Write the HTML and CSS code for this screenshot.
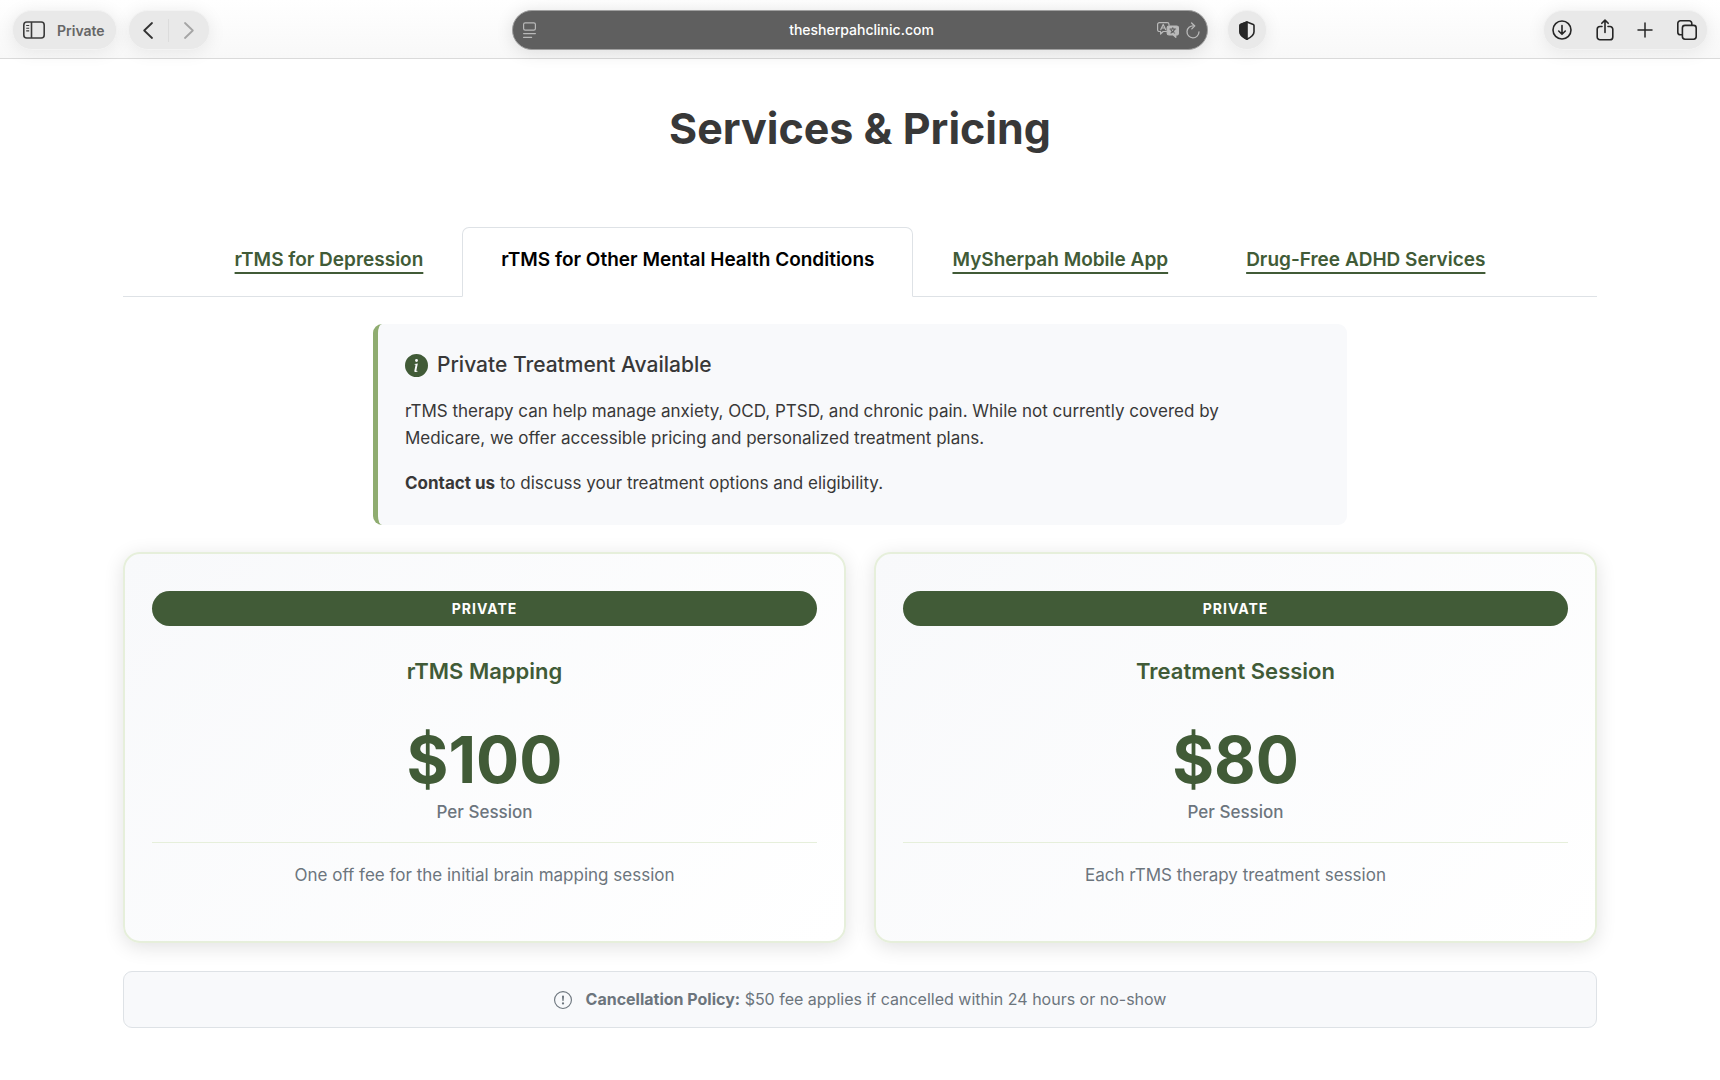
FILE: index.html
```html
<!DOCTYPE html>
<html lang="en">

<head>
    <meta charset="utf-8">
    <title>Services &amp; Pricing</title>
    <link rel="stylesheet" href="styles.css">
</head>

<body>
    <header class="toolbar">
        <div class="toolbar-left">
            <button class="pill private" type="button">
                <svg width="22" height="18" viewBox="0 0 22 18" fill="none" stroke="#3c3c3c" stroke-width="1.6">
                    <rect x="0.8" y="1" width="20.4" height="16" rx="3" />
                    <path d="M8.5 1v16" />
                    <path d="M3.2 4.5h3M3.2 7.2h3M3.2 9.9h3" stroke-width="1.1" />
                </svg>
                Private
            </button>
            <div class="pill history">
                <button type="button" aria-label="Back">
                    <svg width="10" height="17" viewBox="0 0 10 17" fill="none" stroke="#333" stroke-width="1.8" stroke-linecap="round" stroke-linejoin="round"><path d="M9 1L1.2 8.5 9 16" /></svg>
                </button>
                <span class="separator"></span>
                <button type="button" aria-label="Forward">
                    <svg width="10" height="17" viewBox="0 0 10 17" fill="none" stroke="#a5a5a5" stroke-width="1.8" stroke-linecap="round" stroke-linejoin="round"><path d="M1 1l7.8 7.5L1 16" /></svg>
                </button>
            </div>
        </div>

        <div class="address">
            <button class="address-side" type="button" aria-label="Page menu">
                <svg width="13" height="17" viewBox="0 0 13 17" fill="none" stroke="#b9b9b9" stroke-width="1.2" stroke-linecap="round">
                    <rect x="0.6" y="0.8" width="11.8" height="7.4" rx="1.6" />
                    <path d="M0.6 11.6h11.8M0.6 15.4h8" />
                </svg>
            </button>
            <input type="text" value="thesherpahclinic.com" aria-label="Address">
            <div class="address-side end">
                <button type="button" aria-label="Translate">
                    <svg width="22" height="16" viewBox="0 0 22 16" fill="none" stroke="#b9b9b9" stroke-width="1.2" stroke-linecap="round" stroke-linejoin="round">
                        <path d="M9.5 9.5H6.2L3.6 12V9.5H2.4A1.8 1.8 0 0 1 .6 7.7V2.4A1.8 1.8 0 0 1 2.4.6h7.8A1.8 1.8 0 0 1 12 2.4v.8" />
                        <path d="M3.8 7.6l2.4-5.2 2.4 5.2M4.6 6h3.2" />
                        <path d="M12 4h7.6A1.8 1.8 0 0 1 21.4 5.8v5.4a1.8 1.8 0 0 1-1.8 1.8h-.8v2.4L16.3 13H12a1.8 1.8 0 0 1-1.8-1.8V5.8A1.8 1.8 0 0 1 12 4z" fill="#b9b9b9" />
                        <path d="M13 7h5.6M15.8 5.8V7M14 11c2-.8 3.2-2.2 3.6-4M14 8c.6 1.4 2 2.6 3.6 3" stroke="#5f5f5f" />
                    </svg>
                </button>
                <button type="button" aria-label="Reload">
                    <svg width="14" height="17" viewBox="0 0 14 17" fill="none" stroke="#b9b9b9" stroke-width="1.3" stroke-linecap="round" stroke-linejoin="round">
                        <path d="M7.5 3.8A6 6 0 1 0 13 9.8" />
                        <path d="M5.6 1l3.2 2.9-3 3" />
                    </svg>
                </button>
            </div>
        </div>

        <div class="toolbar-right">
            <button class="pill shield" type="button" aria-label="Privacy report">
                <svg width="16" height="19" viewBox="0 0 16 19" fill="none" stroke="#262626" stroke-width="1.6" stroke-linejoin="round">
                    <path d="M8 1l6.3 2.4q.7.3.7 1.1v6.3c0 3.6-3.3 5.7-7 7.4-3.7-1.7-7-3.8-7-7.4V4.500q0-.8.7-1.1z" />
                    <path d="M8 1v17.2c-3.7-1.7-7-3.8-7-7.4V4.500q0-.8.7-1.1z" fill="#262626" />
                </svg>
            </button>
            <div class="pill actions">
                <button type="button" aria-label="Downloads">
                    <svg width="20" height="20" viewBox="0 0 20 20" fill="none" stroke="#262626" stroke-width="1.6" stroke-linecap="round" stroke-linejoin="round">
                        <circle cx="10" cy="10" r="9" />
                        <path d="M10 5.5V14M6.7 11l3.3 3.3 3.3-3.3" />
                    </svg>
                </button>
                <button type="button" aria-label="Share">
                    <svg width="18" height="22" viewBox="0 0 18 22" fill="none" stroke="#262626" stroke-width="1.6" stroke-linecap="round" stroke-linejoin="round">
                        <path d="M6 7.5H4A2.8 2.8 0 0 0 1.2 10.3v7.6A2.8 2.8 0 0 0 4 20.7h10a2.8 2.8 0 0 0 2.8-2.8v-7.6A2.8 2.8 0 0 0 14 7.5h-2" />
                        <path d="M9 13.5V1.2M5.8 4.3L9 1.1l3.2 3.2" />
                    </svg>
                </button>
                <button type="button" aria-label="New tab">
                    <svg width="16" height="16" viewBox="0 0 16 16" fill="none" stroke="#262626" stroke-width="1.5" stroke-linecap="round"><path d="M8 1v14M1 8h14" /></svg>
                </button>
                <button type="button" aria-label="Tab overview">
                    <svg width="20" height="20" viewBox="0 0 20 20" fill="none" stroke="#262626" stroke-width="1.6" stroke-linejoin="round">
                        <rect x="5.4" y="5.4" width="13.8" height="13.8" rx="2.6" />
                        <path d="M5.4 14.8H3.4A2.6 2.6 0 0 1 .8 12.2V3.4A2.6 2.6 0 0 1 3.4.8h8.8a2.6 2.6 0 0 1 2.6 2.6v2" />
                    </svg>
                </button>
            </div>
        </div>
    </header>

    <main>
        <h1>Services &amp; Pricing</h1>

        <nav class="tabs">
            <a class="tab" href="#depression">rTMS for Depression</a>
            <a class="tab active" href="#other">rTMS for Other Mental Health Conditions</a>
            <a class="tab" href="#app">MySherpah Mobile App</a>
            <a class="tab" href="#adhd">Drug-Free ADHD Services</a>
        </nav>

        <section class="info">
            <h2>
                <svg width="23" height="23" viewBox="0 0 16 16" fill="#415b37">
                    <path d="M8 16A8 8 0 1 0 8 0a8 8 0 0 0 0 16m.93-9.412-1 4.705c-.07.34.029.533.304.533.194 0 .487-.07.686-.246l-.088.416c-.287.346-.92.598-1.465.598-.703 0-1.002-.422-.808-1.319l.738-3.468c.064-.293.006-.399-.287-.47l-.451-.081.082-.381 2.29-.287zM8 5.5a1 1 0 1 1 0-2 1 1 0 0 1 0 2" />
                </svg>
                Private Treatment Available
            </h2>
            <p>rTMS therapy can help manage anxiety, OCD, PTSD, and chronic pain. While not currently covered by<br>Medicare, we offer accessible pricing and personalized treatment plans.</p>
            <p><strong>Contact us</strong> to discuss your treatment options and eligibility.</p>
        </section>

        <div class="cards">
            <article class="card">
                <div class="badge">PRIVATE</div>
                <h3>rTMS Mapping</h3>
                <div class="price">$100</div>
                <div class="unit">Per Session</div>
                <p>One off fee for the initial brain mapping session</p>
            </article>
            <article class="card">
                <div class="badge">PRIVATE</div>
                <h3>Treatment Session</h3>
                <div class="price">$80</div>
                <div class="unit">Per Session</div>
                <p>Each rTMS therapy treatment session</p>
            </article>
        </div>

        <div class="policy">
            <svg width="18" height="18" viewBox="0 0 16 16" fill="#6c757d">
                <path d="M8 15A7 7 0 1 1 8 1a7 7 0 0 1 0 14m0 1A8 8 0 1 0 8 0a8 8 0 0 0 0 16" />
                <path d="M7.002 11a1 1 0 1 1 2 0 1 1 0 0 1-2 0M7.1 4.995a.905.905 0 1 1 1.8 0l-.35 3.507a.552.552 0 0 1-1.1 0z" />
            </svg>
            <span><strong>Cancellation Policy:</strong> $50 fee applies if cancelled within 24 hours or no-show</span>
        </div>
    </main>
</body>

</html>
```
FILE: styles.css
```css
* {
    box-sizing: border-box;
}

body {
    margin: 0;
    font: 17px/27px Inter, "Liberation Sans", sans-serif;
    color: #383838;
    background: #fff;
}

button {
    display: flex;
    align-items: center;
    justify-content: center;
    padding: 0;
    border: 0;
    background: none;
    font-family: inherit;
}

h1, h2, h3, p {
    margin: 0;
}

/* browser toolbar */
.toolbar {
    display: grid;
    grid-template-columns: 1fr minmax(0, 696px) 1fr;
    align-items: center;
    height: 59px;
    padding: 2px 12px 0;
    border-bottom: 1px solid #dadada;
    background: linear-gradient(#fff, #f8f8f8);
}

.toolbar-left {
    display: flex;
    gap: 11px;
}

.toolbar-right {
    display: flex;
    justify-content: space-between;
    padding-left: 19px;
}

.pill {
    height: 40px;
    border: 1px solid #f3f3f3;
    border-radius: 20px;
    background: #e9e9e9;
    box-shadow: 0 2px 18px rgba(0, 0, 0, 0.08);
}

.private {
    gap: 12px;
    padding: 0 11px 0 10px;
    font-size: 14px;
    font-weight: 600;
    color: #666;
}

.history {
    display: flex;
    align-items: center;
    width: 82px;
}

.history button {
    flex: 1;
}

.separator {
    width: 1px;
    height: 23px;
    background: #dcdcdc;
}

.address {
    display: flex;
    align-items: center;
    height: 40px;
    padding: 0 7px 0 10px;
    border: 1px solid #a0a0a0;
    border-radius: 20px;
    background: #5f5f5f;
    box-shadow: 0 2px 18px rgba(0, 0, 0, 0.12);
}

.address-side {
    display: flex;
    justify-content: flex-start;
    width: 48px;
}

.address-side.end {
    justify-content: flex-end;
    gap: 7px;
}

.address input {
    flex: 1;
    min-width: 0;
    padding: 0;
    border: 0;
    background: none;
    color: #fff;
    font: 500 14px/20px Inter, sans-serif;
    text-align: center;
}

.shield {
    width: 40px;
}

.actions {
    display: flex;
    align-items: center;
    justify-content: space-between;
    width: 165px;
    padding: 0 10px 0 8px;
}

/* page */
main {
    padding: 42px 123px 52px;
}

h1 {
    font-size: 43px;
    line-height: 54px;
    font-weight: 700;
    text-align: center;
}

.tabs {
    display: flex;
    justify-content: center;
    margin: 72px 0 27px;
    border-bottom: 1px solid #dee2e6;
}

.tab {
    margin-bottom: -1px;
    padding: 17px 38px 21px;
    border: 1px solid transparent;
    border-radius: 7px 7px 0 0;
    font-size: 19px;
    line-height: 30px;
    font-weight: 600;
    color: #415b37;
    text-decoration: underline 2px;
    text-underline-offset: 6px;
    text-decoration-skip-ink: none;
}

.tab.active {
    border-color: #dee2e6 #dee2e6 #fff;
    background: #fff;
    color: #000;
    text-decoration: none;
}

.info {
    max-width: 974px;
    margin: 0 auto;
    padding: 28px 28px 28px 27px;
    border-left: 5px solid #8fac70;
    border-radius: 9px;
    background: #f8f9fb;
}

.info h2 {
    display: flex;
    align-items: center;
    gap: 9px;
    margin-bottom: 20px;
    font-size: 21px;
    line-height: 26px;
    font-weight: 500;
}

.info p + p {
    margin-top: 18px;
}

.cards {
    display: grid;
    grid-template-columns: 1fr 1fr;
    gap: 28px;
    margin: 27px 0 28px;
}

.card {
    padding: 37px 27px 52px;
    border: 2px solid #e6efdb;
    border-radius: 17px;
    background: linear-gradient(135deg, #f8f9fb, #fff);
    box-shadow: 0 4px 20px rgba(0, 0, 0, 0.12);
    text-align: center;
}

.badge {
    padding: 5px 0;
    border-radius: 18px;
    background: #415b37;
    color: #fff;
    font-size: 14px;
    line-height: 25px;
    font-weight: 700;
    letter-spacing: 1px;
}

.card h3 {
    margin-top: 31px;
    font-size: 22px;
    line-height: 28px;
    font-weight: 600;
    color: #415b37;
}

.price {
    margin-top: 43px;
    font-size: 64px;
    line-height: 64px;
    font-weight: 700;
    color: #415b37;
}

.unit {
    margin: 8px 0 18px;
    font-size: 17px;
    line-height: 24px;
    font-weight: 500;
    color: #6c757d;
}

.card p {
    padding-top: 19px;
    border-top: 1px solid #e6efdb;
    color: #6c757d;
}

.policy {
    display: flex;
    align-items: center;
    justify-content: center;
    gap: 14px;
    padding: 14px;
    border: 1px solid #dee2e6;
    border-radius: 9px;
    background: #f8f9fb;
    font-size: 16px;
    color: #6c757d;
}
```
